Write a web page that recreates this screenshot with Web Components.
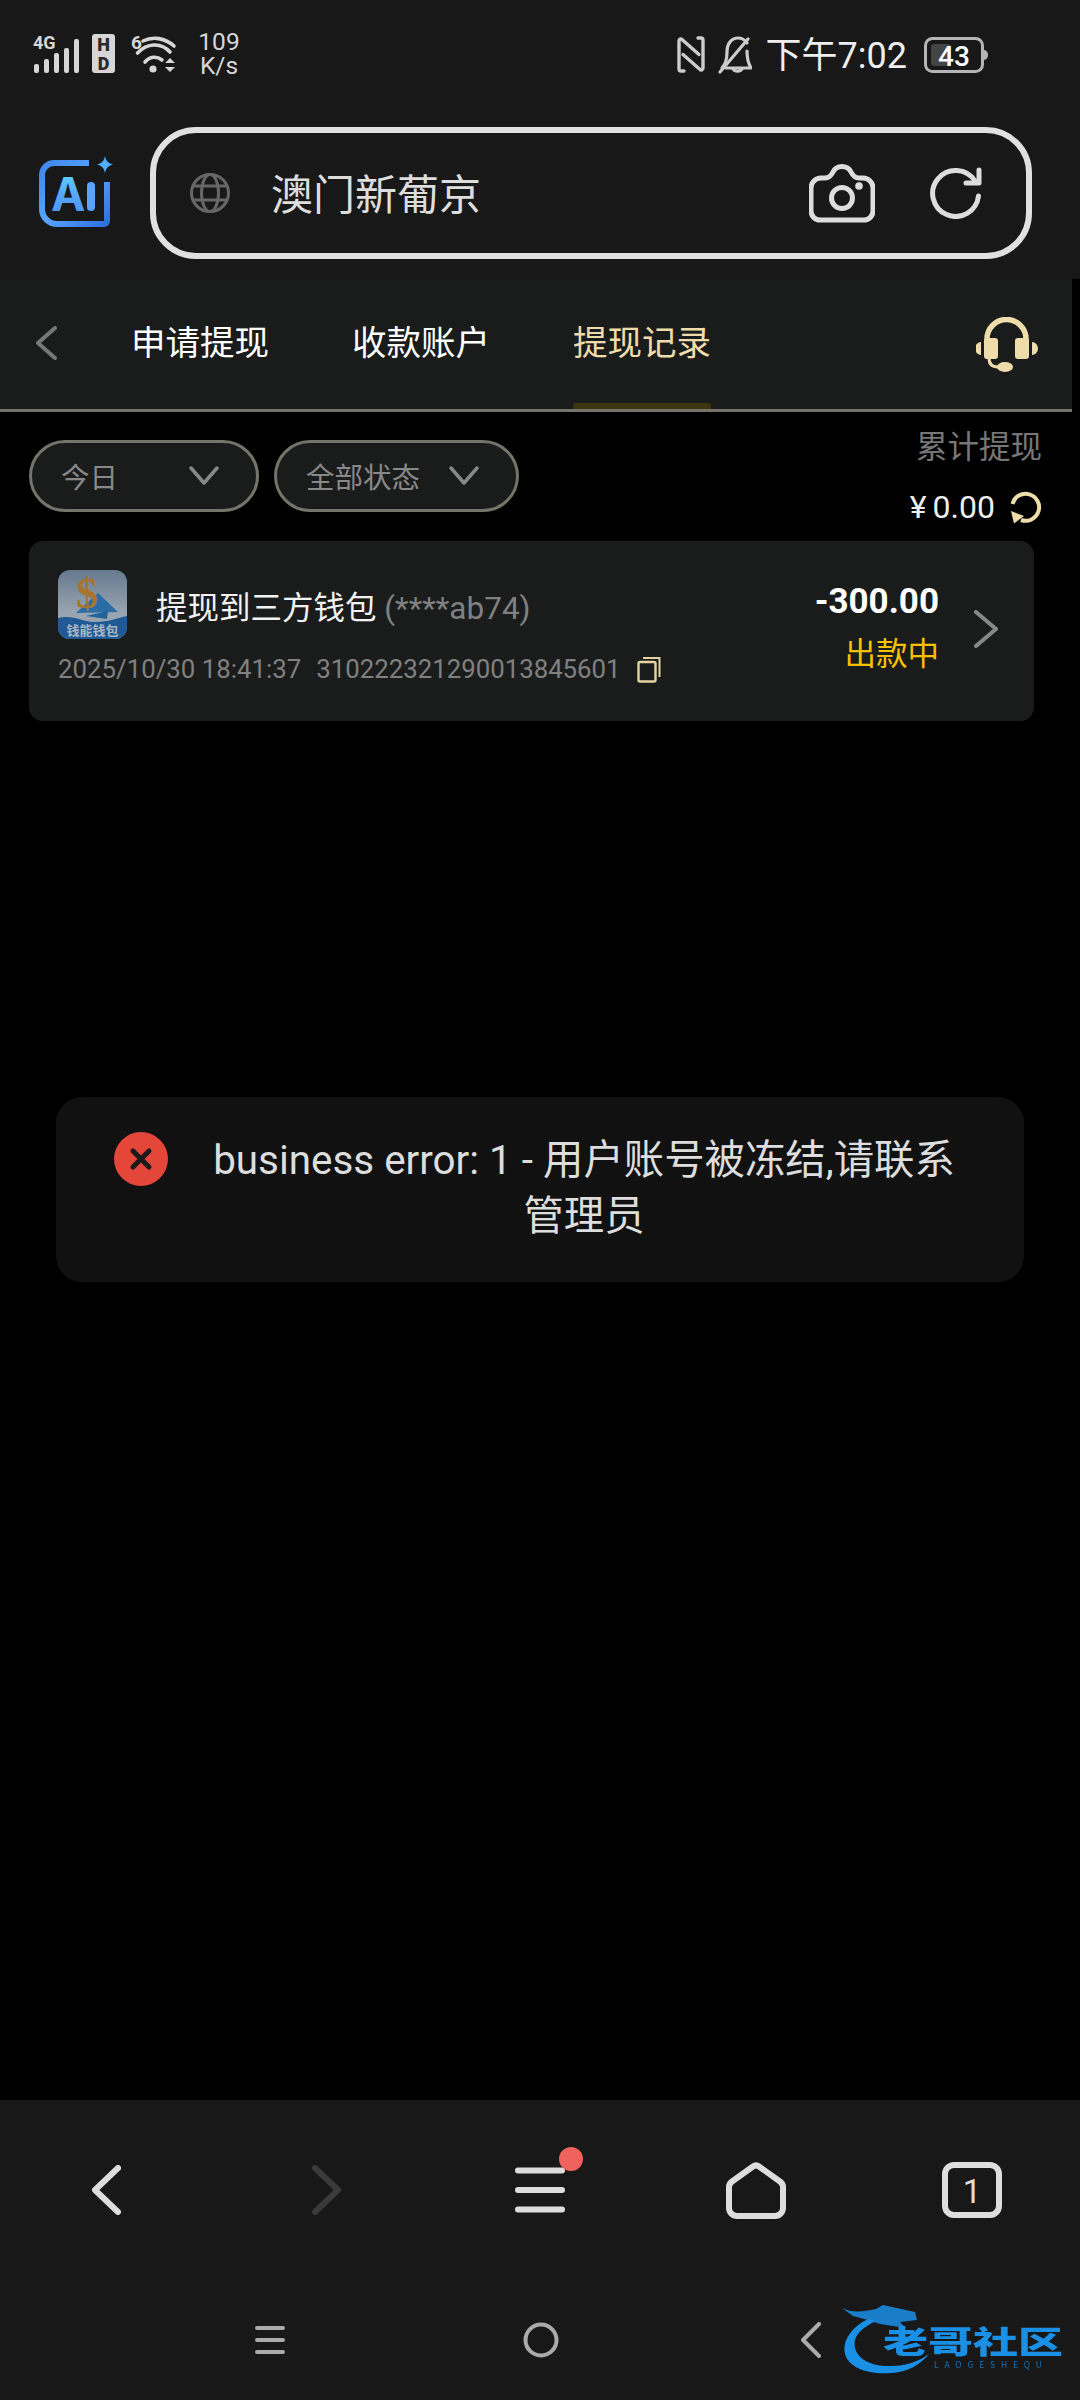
<!DOCTYPE html>
<html lang="zh">
<head>
<meta charset="utf-8">
<title>提现记录</title>
<style>
  html, body { margin: 0; padding: 0; background: #000; }
  body {
    width: 1080px;
    height: 2400px;
    position: relative;
    overflow: hidden;
    display: flex;
    flex-direction: column;
    font-family: Roboto, "Noto Sans CJK SC", sans-serif;
    color: #ddd;
  }
</style>
</head>
<body>
  <status-bar></status-bar>
  <search-bar>澳门新葡京</search-bar>
  <tab-bar>
    <nav-tab>申请提现</nav-tab>
    <nav-tab>收款账户</nav-tab>
    <nav-tab active>提现记录</nav-tab>
  </tab-bar>
  <filter-row>
    <filter-pill style="--w:230px">今日</filter-pill>
    <filter-pill style="--w:245px">全部状态</filter-pill>
  </filter-row>
  <withdraw-card></withdraw-card>
  <error-toast>business error: 1 - 用户账号被冻结,请联系管理员</error-toast>
  <browser-bar></browser-bar>
  <system-nav></system-nav>

<script>
class StatusBar extends HTMLElement {
  connectedCallback() {
    this.attachShadow({ mode: 'open' });
    this.shadowRoot.innerHTML = `
      <style>
        :host { display: flex; align-items: flex-start; height: 79px; background: #181818; padding: 30px 0 0 30px; box-sizing: border-box; }
        svg { display: block; }
        text { font-family: Roboto, sans-serif; }
        .speed { margin-left: 14px; width: 50px; font-size: 24.500px; line-height: 24px; color: #d6d6d6; text-align: center; }
        .right { margin-left: auto; margin-top: 2px; display: flex; align-items: center; height: 46px; }
        .time { align-self: flex-start; margin: 1px 17px 0 14px; font-size: 36px; line-height: 46px; color: #eee; }
        .tail { width: 92px; }
      </style>
      <svg width="150" height="46" viewBox="30 30 150 46">
        <text x="33" y="49" font-size="18" font-weight="700" fill="#d6d6d6">4G</text>
        <g fill="#d6d6d6">
          <rect x="34" y="64" width="5" height="9" rx="2"/>
          <rect x="44" y="59" width="5" height="14" rx="2"/>
          <rect x="54" y="53" width="5" height="20" rx="2"/>
          <rect x="64" y="48" width="5" height="25" rx="2"/>
          <rect x="74" y="39" width="5" height="34" rx="2"/>
          <rect x="92" y="34" width="23" height="39" rx="3"/>
        </g>
        <text x="103.500" y="51" font-size="18" font-weight="900" text-anchor="middle" fill="#2a2a2a">H</text>
        <text x="103.500" y="70" font-size="18" font-weight="900" text-anchor="middle" fill="#2a2a2a">D</text>
        <text x="131" y="49" font-size="19" font-weight="700" fill="#d6d6d6">6</text>
        <g fill="none" stroke="#d6d6d6" stroke-width="3.600" stroke-linecap="round">
          <path d="M143 41 C153 36 165 38 174 46"/>
          <path d="M137.500 53 C147 43 161 42 170 52"/>
          <path d="M145 62 C150 56 157 56 162 60"/>
        </g>
        <circle cx="153" cy="69" r="3.600" fill="#d6d6d6"/>
        <path d="M170 58 l5 5 h-10z M170 72 l5-5 h-10z" fill="#d6d6d6"/>
      </svg>
      <div class="speed">109<br>K/s</div>
      <div class="right">
        <svg width="34" height="40" viewBox="675 34 34 40" fill="none" stroke="#ccc" stroke-width="3.400" stroke-linecap="round" stroke-linejoin="round">
          <path d="M685 70h-3a2 2 0 0 1-2-2V40c0-2 2-2.500 3-1.500l17 15"/>
          <path d="M699 37h3a2 2 0 0 1 2 2v28c0 2-2 2.500-3 1.500l-17-15"/>
        </svg>
        <svg style="margin-left:8px" width="36" height="40" viewBox="718 34 36 40" fill="none" stroke="#ccc" stroke-width="3.200" stroke-linecap="round" stroke-linejoin="round">
          <path d="M724 67c4-4 5-10 5-16 0-9 5-14 11-14 4 0 7 2 9 5"/>
          <path d="M749 50c0 6 1 12 4 17H728"/>
          <path d="M722 71 750 38"/>
          <path d="M735 68a5 4 0 0 0 9 0"/>
        </svg>
        <div class="time">下午7:02</div>
        <svg width="64" height="38" viewBox="925 35 64 38">
          <rect x="926.500" y="37.500" width="57" height="33" rx="7" fill="none" stroke="#b5b5b5" stroke-width="3"/>
          <rect x="932" y="43" width="20" height="22" rx="3" fill="#444"/>
          <path d="M985 49a4 5 0 0 1 0 10z" fill="#b5b5b5"/>
          <text x="955" y="65" font-size="28" font-weight="500" text-anchor="middle" fill="#fff">43</text>
        </svg>
        <div class="tail"></div>
      </div>
    `;
  }
}
customElements.define('status-bar', StatusBar);

class SearchBar extends HTMLElement {
  connectedCallback() {
    this.attachShadow({ mode: 'open' });
    this.shadowRoot.innerHTML = `
      <style>
        :host { display: flex; height: 200px; background: #181818; padding: 48px 48px 0 39px; box-sizing: border-box; align-items: flex-start; }
        svg { display: block; flex: none; }
        text { font-family: Inter, Roboto, sans-serif; }
        .logo { margin-top: 29px; }
        .box {
          margin-left: 37px;
          flex: 1;
          height: 132px;
          box-sizing: border-box;
          border: 6px solid #e0e0e0;
          border-radius: 46px;
          display: flex;
          align-items: center;
          padding-left: 34px;
        }
        .label { margin-left: 41px; margin-top: -3px; font-size: 42px; color: #ddd; flex: 1; }
        .refresh { margin: 0 44px 0 55px; }
      </style>
      <svg class="logo" width="74" height="71" viewBox="39 156 74 71">
        <defs>
          <linearGradient id="fr" x1="0" y1="0" x2="1" y2="1">
            <stop offset="0" stop-color="#3f86ee"/><stop offset="0.5" stop-color="#58a4ff"/><stop offset="1" stop-color="#2f6fe0"/>
          </linearGradient>
          <linearGradient id="tx" x1="0" y1="0" x2="0" y2="1">
            <stop offset="0" stop-color="#5fe2ff"/><stop offset="0.5" stop-color="#58a8ff"/><stop offset="1" stop-color="#4a8cf5"/>
          </linearGradient>
        </defs>
        <path d="M89 163H54a12 12 0 0 0-12 12v34a15 15 0 0 0 15 15h47a3 3 0 0 0 3-3V182" fill="none" stroke="url(#fr)" stroke-width="6"/>
        <text x="51" y="211" font-size="46" font-weight="700" fill="url(#tx)">A</text>
        <rect x="87" y="182" width="8" height="29" rx="4" fill="#58a4ff"/>
        <path d="M105 156c1 5 3 7 8 8.500-5 1.500-7 3.500-8 8.500-1-5-3-7-8-8.500 5-1.500 7-3.500 8-8.500z" fill="#4fb0ff"/>
      </svg>
      <div class="box">
        <svg width="40" height="40" viewBox="190 173 40 40" fill="none" stroke="#666" stroke-width="3">
          <circle cx="210" cy="193" r="18.500"/>
          <ellipse cx="210" cy="193" rx="8.500" ry="18.500"/>
          <path d="M193 186H227M193 200H227"/>
        </svg>
        <div class="label"><slot></slot></div>
        <svg width="66" height="59" viewBox="810 163 66 59" fill="none" stroke="#ddd" stroke-width="5" stroke-linejoin="round">
          <path d="M822 177h4c4 0 6-2 8-6 2-4 5-5.500 9-5.500 4 0 7 1.500 9 5.500 2 4 4 6 8 6h4a10 10 0 0 1 10 10v23a9 9 0 0 1-9 9h-44a9 9 0 0 1-9-9v-23a10 10 0 0 1 10-10z"/>
          <circle cx="843" cy="197" r="10.500"/>
          <circle cx="860" cy="185" r="3.800" fill="#ddd" stroke="none"/>
        </svg>
        <svg class="refresh" width="52" height="52" viewBox="931 168 52 52" fill="none" stroke="#ddd" stroke-width="5" stroke-linecap="round" stroke-linejoin="round">
          <path d="M979.500 197A23 23 0 1 1 976 182"/>
          <path d="M980 171V184H967"/>
        </svg>
      </div>
    `;
  }
}
customElements.define('search-bar', SearchBar);

class TabBar extends HTMLElement {
  connectedCallback() {
    this.attachShadow({ mode: 'open' });
    this.shadowRoot.innerHTML = `
      <style>
        :host { display: flex; width: 1072px; height: 133px; background: #1a1c1c; border-bottom: 3px solid #76736a; box-sizing: border-box; position: relative; }
        svg { display: block; flex: none; }
        .back { margin: 47px 0 0 35px; }
        .tabs { display: flex; gap: 83px; margin-left: 74px; }
        .support { margin: 38px 0 0 auto; margin-right: 34px; }
      </style>
      <svg class="back" width="22" height="34" viewBox="0 0 22 34" fill="none" stroke="#777" stroke-width="4" stroke-linecap="round" stroke-linejoin="round"><path d="M20 2 3 17 20 32"/></svg>
      <div class="tabs"><slot></slot></div>
      <svg class="support" width="62" height="55" viewBox="976 317 62 55" fill="#efdcab">
        <path d="M987 345V339a19.500 19.500 0 0 1 39 0V345" fill="none" stroke="#efdcab" stroke-width="5.500"/>
        <rect x="984" y="338" width="14" height="21" rx="3"/>
        <rect x="1015" y="338" width="14" height="21" rx="3"/>
        <path d="M981 342a6 6.500 0 0 0 0 13z"/>
        <path d="M1032 342a6 6.500 0 0 1 0 13z"/>
        <path d="M989 358c0 6 3 9 9 9h4" fill="none" stroke="#efdcab" stroke-width="3"/>
        <ellipse cx="1005" cy="367" rx="8" ry="5"/>
      </svg>
    `;
  }
}
customElements.define('tab-bar', TabBar);

class NavTab extends HTMLElement {
  connectedCallback() {
    this.attachShadow({ mode: 'open' });
    this.shadowRoot.innerHTML = `
      <style>
        :host { display: block; position: relative; width: 138px; height: 130px; font-size: 34.500px; line-height: 128px; color: #fff; text-align: center; white-space: nowrap; }
        :host([active]) { color: #f0dcaa; }
        :host([active])::after { content: ""; position: absolute; left: 0; right: 0; bottom: 0; height: 6px; border-radius: 3px 3px 0 0; background: #3d3410; }
      </style>
      <slot></slot>
    `;
  }
}
customElements.define('nav-tab', NavTab);

class FilterRow extends HTMLElement {
  connectedCallback() {
    this.attachShadow({ mode: 'open' });
    this.shadowRoot.innerHTML = `
      <style>
        :host { display: flex; height: 129px; padding: 14px 38px 0 29px; box-sizing: border-box; }
        .pills { display: flex; gap: 15px; margin-top: 14px; align-items: flex-start; }
        .total { margin-left: auto; display: flex; flex-direction: column; align-items: flex-end; }
        .label { font-size: 31.500px; line-height: 44px; color: #777; }
        .sum { display: flex; align-items: center; margin-top: 15px; line-height: 44px; font-size: 32px; color: #eee; }
        .sum i { font-style: normal; margin-right: 6px; }
        svg { display: block; margin-left: 15px; }
      </style>
      <div class="pills"><slot></slot></div>
      <div class="total">
        <div class="label">累计提现</div>
        <div class="sum"><i>¥</i>0.00
          <svg width="32" height="33" viewBox="1011 489 32 33" fill="none" stroke="#efdcab" stroke-width="4">
            <path d="M1013.500 502A13.500 13.500 0 1 1 1022 518"/>
            <path d="M1012 509 1025 514 1015 521.500z" fill="#efdcab" stroke="none"/>
          </svg>
        </div>
      </div>
    `;
  }
}
customElements.define('filter-row', FilterRow);

class FilterPill extends HTMLElement {
  connectedCallback() {
    this.attachShadow({ mode: 'open' });
    this.shadowRoot.innerHTML = `
      <style>
        :host { display: flex; align-items: center; justify-content: space-between; width: var(--w); height: 72px; box-sizing: border-box; padding: 0 37px 2px 29px; border: 3px solid #75736a; border-radius: 36px; background: #1a1c1c; font-size: 28.500px; color: #888; white-space: nowrap; }
        svg { display: block; }
      </style>
      <slot></slot>
      <svg width="30" height="19" viewBox="0 0 30 19" fill="none" stroke="#888" stroke-width="3.500" stroke-linecap="round" stroke-linejoin="round"><path d="M2 2 15 17 28 2"/></svg>
    `;
  }
}
customElements.define('filter-pill', FilterPill);

class WithdrawCard extends HTMLElement {
  connectedCallback() {
    this.attachShadow({ mode: 'open' });
    this.shadowRoot.innerHTML = `
      <style>
        :host { display: flex; align-items: flex-start; width: 1005px; height: 180px; margin-left: 29px; background: #1a1c1c; border-radius: 14px; box-sizing: border-box; padding-left: 29px; }
        svg { display: block; flex: none; }
        .main { margin-top: 29px; }
        .head { display: flex; align-items: center; height: 69px; }
        .title { margin-left: 29px; font-size: 31.500px; color: #f2f2f2; white-space: nowrap; }
        .title span { color: #808080; font-size: 31.500px; }
        .meta { display: flex; align-items: center; margin-top: 12px; height: 36px; font-size: 25.800px; color: #808080; white-space: nowrap; }
        .meta .no { margin-left: 15px; }
        .meta svg { margin-left: 16px; }
        .side { margin-left: auto; margin-top: 39px; display: flex; flex-direction: column; align-items: flex-end; }
        .amount { font-size: 35px; line-height: 44px; font-weight: 700; color: #fff; }
        .state { margin-top: 9px; font-size: 31.500px; line-height: 44px; color: #f5c000; }
        .more { margin: 69px 36px 0 35px; }
      </style>
      <div class="main">
        <div class="head">
          <svg width="69" height="69" viewBox="0 0 69 69">
            <defs>
              <clipPath id="ic"><rect width="69" height="69" rx="12"/></clipPath>
              <linearGradient id="sky" x1="0" y1="0" x2="0" y2="1"><stop offset="0" stop-color="#65798e"/><stop offset="0.6" stop-color="#98a4b0"/></linearGradient>
            </defs>
            <g clip-path="url(#ic)">
              <rect width="69" height="69" fill="url(#sky)"/>
              <path d="M0 48C14 44 24 52 38 52 50 52 60 48 69 46V69H0z" fill="#1f5a96"/>
              <path d="M40 23 60 42 18 43z" fill="#2a6da6"/>
              <path d="M28 46 50 41 49 49z" fill="#23639c"/>
              <text x="29" y="38" font-size="44" font-weight="700" text-anchor="middle" font-family="'Liberation Serif', serif" fill="#a87430">$</text>
              <text x="34.500" y="65" font-size="13" font-weight="700" text-anchor="middle" font-family="'Noto Sans CJK SC', sans-serif" fill="#aab6c2">钱能钱包</text>
            </g>
          </svg>
          <div class="title">提现到三方钱包 <span>(****ab74)</span></div>
        </div>
        <div class="meta">
          <div>2025/10/30 18:41:37</div>
          <div class="no">310222321290013845601</div>
          <svg width="24" height="27" viewBox="0 0 24 27" fill="none" stroke="#e6d3a2" stroke-width="2">
            <rect x="1.500" y="6" width="17" height="19.500" rx="1.500" stroke-width="2.400"/>
            <path d="M6 2H22.500V21"/>
          </svg>
        </div>
      </div>
      <div class="side">
        <div class="amount">-300.00</div>
        <div class="state">出款中</div>
      </div>
      <svg class="more" width="24" height="38" viewBox="0 0 24 38" fill="none" stroke="#888" stroke-width="4" stroke-linecap="round" stroke-linejoin="round"><path d="M2 2 22 19 2 36"/></svg>
    `;
  }
}
customElements.define('withdraw-card', WithdrawCard);

class ErrorToast extends HTMLElement {
  connectedCallback() {
    this.attachShadow({ mode: 'open' });
    this.shadowRoot.innerHTML = `
      <style>
        :host { position: absolute; left: 56px; top: 1097px; width: 968px; box-sizing: border-box; display: flex; align-items: flex-start; padding: 35px 60px 37px 58px; background: #111; border-radius: 26px; }
        svg { display: block; flex: none; }
        .text { margin: 1px 0 0 36px; flex: 1; font-size: 40.400px; line-height: 56px; color: #ddd; text-align: center; }
      </style>
      <svg width="54" height="54" viewBox="0 0 54 54">
        <circle cx="27" cy="27" r="27" fill="#e5463a"/>
        <path d="M19 19 35 35M35 19 19 35" stroke="#1a1a1a" stroke-width="5" stroke-linecap="round"/>
      </svg>
      <div class="text"><slot></slot></div>
    `;
  }
}
customElements.define('error-toast', ErrorToast);

class BrowserBar extends HTMLElement {
  connectedCallback() {
    this.attachShadow({ mode: 'open' });
    this.shadowRoot.innerHTML = `
      <style>
        :host { display: grid; grid-template-columns: repeat(5, 216px); align-items: center; justify-items: center; height: 180px; margin-top: auto; background: #181818; }
        svg { display: block; }
        .menu { position: relative; }
        .dot { position: absolute; right: -18px; top: -20px; width: 24px; height: 24px; border-radius: 50%; background: #f0625d; }
        text { font-family: Roboto, sans-serif; }
      </style>
      <svg style="margin-right:5px" width="30" height="50" viewBox="0 0 30 50" fill="none" stroke="#ddd" stroke-width="6" stroke-linecap="round" stroke-linejoin="round"><path d="M27 3 4 25 27 47"/></svg>
      <svg style="margin-left:5px" width="30" height="50" viewBox="0 0 30 50" fill="none" stroke="#3a3a3a" stroke-width="6" stroke-linecap="round" stroke-linejoin="round"><path d="M3 3 26 25 3 47"/></svg>
      <div class="menu">
        <svg width="50" height="46" viewBox="0 0 50 46" stroke="#ddd" stroke-width="6" stroke-linecap="round"><path d="M3 3.500H47M3 23H47M3 42.500H47"/></svg>
        <div class="dot"></div>
      </div>
      <svg width="60" height="57" viewBox="726 2162 60 57" fill="none" stroke="#ddd" stroke-width="6" stroke-linejoin="round">
        <path d="M753 2166.500c2-1.500 4-1.500 6 0l21 15c2 1.500 3 3 3 5.500v21a8 8 0 0 1-8 8H737a8 8 0 0 1-8-8v-21c0-2.500 1-4 3-5.500z"/>
      </svg>
      <svg width="60" height="56" viewBox="0 0 60 56">
        <rect x="3" y="3" width="54" height="50" rx="9" fill="none" stroke="#ddd" stroke-width="6"/>
        <text x="30" y="41" font-size="33" text-anchor="middle" fill="#ddd">1</text>
      </svg>
    `;
  }
}
customElements.define('browser-bar', BrowserBar);

class SystemNav extends HTMLElement {
  connectedCallback() {
    this.attachShadow({ mode: 'open' });
    this.shadowRoot.innerHTML = `
      <style>
        :host { display: flex; align-items: center; height: 120px; padding: 0 0 0 255px; background: #181818; position: relative; }
        svg { display: block; flex: none; }
        .home { margin-left: 238px; }
        .back { margin-left: 242px; }
        .mark { position: absolute; left: 841px; top: 20px; filter: blur(0.6px); }
        .mark text { font-family: "Noto Sans CJK SC", sans-serif; }
      </style>
      <svg width="30" height="30" viewBox="0 0 30 30" stroke="#aaa" stroke-width="4" stroke-linecap="round"><path d="M2 3H28M2 15H28M2 27H28"/></svg>
      <svg class="home" width="36" height="36" viewBox="0 0 36 36" fill="none" stroke="#aaa" stroke-width="4"><circle cx="18" cy="18" r="15.500"/></svg>
      <svg class="back" width="20" height="36" viewBox="0 0 20 36" fill="none" stroke="#aaa" stroke-width="4" stroke-linecap="round" stroke-linejoin="round"><path d="M18 2 2 18 18 34"/></svg>
      <svg class="mark" width="224" height="76" viewBox="841 2300 224 76">
        <path d="M868 2319C850 2328 842 2342 845 2354 849 2368 868 2375 892 2373 908 2372 921 2364 929 2354 918 2362 905 2366 892 2366 873 2367 858 2360 855 2348 852 2336 862 2328 876 2321z" fill="#1a8fe6"/>
        <path d="M842 2308C852 2313 862 2312 876 2309L883 2305 915 2312 917 2320 900 2322 906 2328 880 2324 868 2320 853 2316z" fill="#1a8fe6" opacity="0.85"/>
        <text x="883" y="2353" font-size="31" font-weight="900" fill="#1a8fe6" textLength="180" lengthAdjust="spacingAndGlyphs">老哥社区</text>
        <text x="934" y="2368" font-size="8.500" fill="#1670b5" textLength="108">LAOGESHEQU</text>
      </svg>
    `;
  }
}
customElements.define('system-nav', SystemNav);
</script>
</body>
</html>
